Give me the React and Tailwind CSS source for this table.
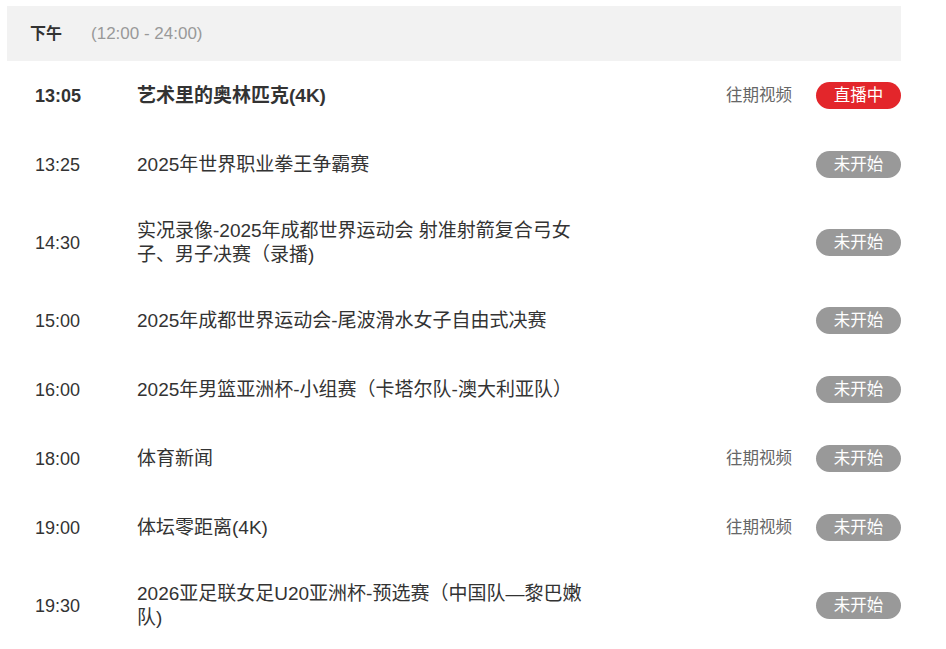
const programs = [
  { time: "13:05", title: "艺术里的奥林匹克(4K)", replay: true, live: true },
  { time: "13:25", title: "2025年世界职业拳王争霸赛" },
  { time: "14:30", title: "实况录像-2025年成都世界运动会 射准射箭复合弓女子、男子决赛（录播)" },
  { time: "15:00", title: "2025年成都世界运动会-尾波滑水女子自由式决赛" },
  { time: "16:00", title: "2025年男篮亚洲杯-小组赛（卡塔尔队-澳大利亚队）" },
  { time: "18:00", title: "体育新闻", replay: true },
  { time: "19:00", title: "体坛零距离(4K)", replay: true },
  { time: "19:30", title: "2026亚足联女足U20亚洲杯-预选赛（中国队—黎巴嫩队)" },
];

export default function App() {
  return (
    <div
      className="min-h-screen bg-white pt-[6px] text-[#333]"
      style={{ fontFamily: '"Liberation Sans", "Noto Sans CJK SC", sans-serif' }}
    >
      <div className="ml-[7px] w-[894px]">

        {/* HEADER */}
        <div className="h-[55px] bg-[#f2f2f2] flex items-center pl-[23px]">
          <span className="text-[16px] font-bold text-[#333]">下午</span>
          <span className="ml-[29px] text-[17px] text-[#999]">(12:00 - 24:00)</span>
        </div>

        {/* LIST */}
        {programs.map((p) => (
          <div key={p.time} className="flex items-center min-h-[69px] py-[19.5px]">
            <div
              className={
                "w-[130px] pl-[28px] shrink-0 text-[18px] leading-[24px] " +
                (p.live ? "font-bold" : "")
              }
            >
              {p.time}
            </div>
            <div
              className={
                "w-[450px] text-[19px] leading-[24px] " + (p.live ? "font-bold" : "")
              }
            >
              {p.title}
            </div>
            <div className="flex-1 flex items-center justify-end gap-[24px]">
              {p.replay && <span className="text-[16.5px] text-[#666]">往期视频</span>}
              {p.live ? (
                <span className="w-[85px] h-[27px] rounded-full bg-[#e3262b] text-white text-[16.5px] flex items-center justify-center">
                  直播中
                </span>
              ) : (
                <span className="w-[85px] h-[27px] rounded-full bg-[#999] text-white text-[16.5px] flex items-center justify-center">
                  未开始
                </span>
              )}
            </div>
          </div>
        ))}
      </div>
    </div>
  );
}
